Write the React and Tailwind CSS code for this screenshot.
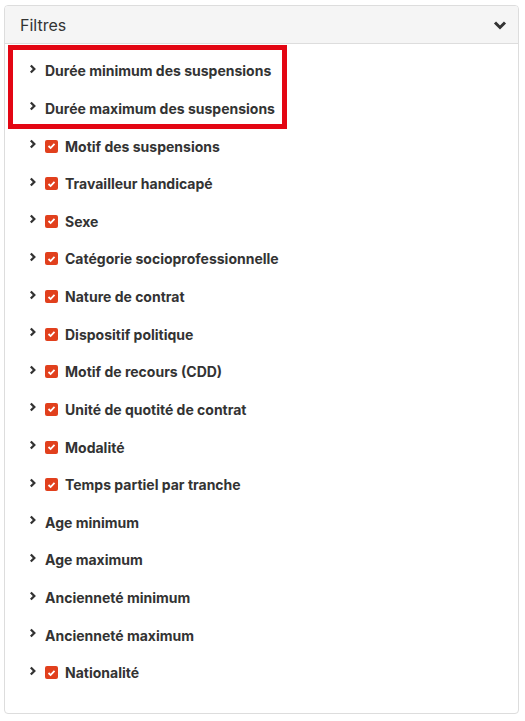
import React from "react";

const filters = [
  { label: "Durée minimum des suspensions", checked: false },
  { label: "Durée maximum des suspensions", checked: false },
  { label: "Motif des suspensions", checked: true },
  { label: "Travailleur handicapé", checked: true },
  { label: "Sexe", checked: true },
  { label: "Catégorie socioprofessionnelle", checked: true },
  { label: "Nature de contrat", checked: true },
  { label: "Dispositif politique", checked: true },
  { label: "Motif de recours (CDD)", checked: true },
  { label: "Unité de quotité de contrat", checked: true },
  { label: "Modalité", checked: true },
  { label: "Temps partiel par tranche", checked: true },
  { label: "Age minimum", checked: false },
  { label: "Age maximum", checked: false },
  { label: "Ancienneté minimum", checked: false },
  { label: "Ancienneté maximum", checked: false },
  { label: "Nationalité", checked: true },
];

function ChevronRight() {
  return (
    <svg width="8" height="10" viewBox="0 0 8 10" className="shrink-0">
      <polyline points="1.8,1.5 5.3,5 1.8,8.5" fill="none" stroke="#333" strokeWidth="2.3" />
    </svg>
  );
}

function Checkbox() {
  return (
    <span className="flex h-[13px] w-[13px] shrink-0 items-center justify-center rounded-[2px] bg-[#e1401d]">
      <svg width="9" height="8" viewBox="0 0 9 8">
        <polyline points="1.5,4 3.6,6 7.5,1.8" fill="none" stroke="#fff" strokeWidth="1.8" />
      </svg>
    </span>
  );
}

function FilterRow({ label, checked }) {
  return (
    <li className="flex h-[37.625px] items-center pl-[24px]">
      <span className="-mt-[4px] flex w-[16px]">
        <ChevronRight />
      </span>
      {checked && (
        <span className="mr-[7px]">
          <Checkbox />
        </span>
      )}
      <span className="text-[14px] font-bold text-[#333]">{label}</span>
    </li>
  );
}

export default function App() {
  return (
    <div className="min-h-screen bg-white pt-[5px] pl-[4px] pr-[6px] font-['Inter','Liberation_Sans',sans-serif]">
      <div className="h-[709px] overflow-hidden rounded-[4px] border border-[#dddddd] bg-white">
        <div className="flex h-[38px] items-center justify-between border-b border-[#dddddd] bg-[#f5f5f5] pl-[15px] pr-[11px]">
          <span className="text-[16px] text-[#333]">Filtres</span>
          <svg width="14" height="10" viewBox="0 0 14 10">
            <polyline points="2,2.5 7,7.5 12,2.5" fill="none" stroke="#333" strokeWidth="3" />
          </svg>
        </div>
        <div className="relative pt-[8px]">
          <div className="pointer-events-none absolute left-[3px] top-[1px] h-[84px] w-[279px] border-[5px] border-[#e30613]" />
          <ul>
            {filters.map((f) => (
              <FilterRow key={f.label} {...f} />
            ))}
          </ul>
        </div>
      </div>
    </div>
  );
}
